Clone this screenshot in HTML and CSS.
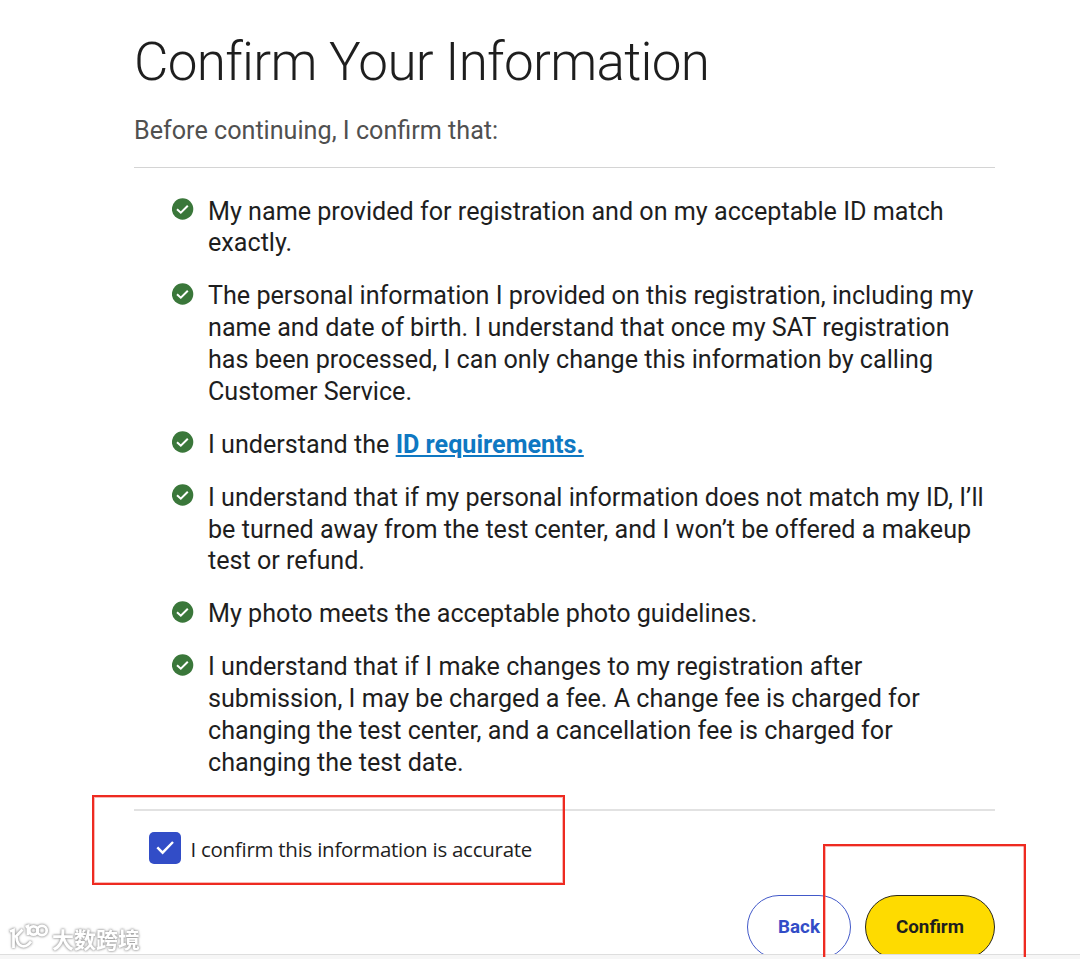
FILE: index.html
```html
<!DOCTYPE html>
<html lang="en">
<head>
<meta charset="utf-8">
<title>Confirm Your Information</title>
<link rel="stylesheet" href="styles.css">
</head>
<body>
<svg class="defs" width="0" height="0" aria-hidden="true">
  <symbol id="tick" viewBox="0 0 22 22">
    <circle cx="10.600" cy="11" r="10.700" fill="#3a773a"/>
    <path d="M5 11.200 8.800 14.700 15.800 7.700" fill="none" stroke="#fff" stroke-width="2"/>
  </symbol>
</svg>
<main class="page">
  <h1 class="title">Confirm Your Information</h1>
  <p class="lead">Before continuing, I confirm that:</p>
  <ul class="terms">
    <li class="term"><svg class="tick"><use href="#tick"/></svg><span class="text">My name provided for registration and on my acceptable ID match<br>exactly.</span></li>
    <li class="term"><svg class="tick"><use href="#tick"/></svg><span class="text">The personal information I provided on this registration, including my<br>name and date of birth. I understand that once my SAT registration<br>has been processed, I can only change this information by calling<br>Customer Service.</span></li>
    <li class="term"><svg class="tick"><use href="#tick"/></svg><span class="text">I understand the <a class="link">ID requirements.</a></span></li>
    <li class="term"><svg class="tick"><use href="#tick"/></svg><span class="text">I understand that if my personal information does not match my ID, I’ll<br>be turned away from the test center, and I won’t be offered a makeup<br>test or refund.</span></li>
    <li class="term"><svg class="tick"><use href="#tick"/></svg><span class="text">My photo meets the acceptable photo guidelines.</span></li>
    <li class="term"><svg class="tick"><use href="#tick"/></svg><span class="text">I understand that if I make changes to my registration after<br>submission, I may be charged a fee. A change fee is charged for<br>changing the test center, and a cancellation fee is charged for<br>changing the test date.</span></li>
  </ul>
  <label class="accept">
    <span class="box"><svg width="32" height="32" viewBox="0 0 32 32"><path d="M8.3 15.4 13.6 20.7 24 10" fill="none" stroke="#fff" stroke-width="2.4"/></svg></span>
    <span class="accept-text">I confirm this information is accurate</span>
  </label>
  <div class="actions">
    <button class="btn back">Back</button>
    <button class="btn confirm">Confirm</button>
  </div>
</main>
<footer class="edge"></footer>
<div class="mark mark-check"></div>
<div class="mark mark-confirm"></div>
<div class="watermark">
  <svg class="logo" width="42" height="32" viewBox="0 0 42 32">
    <g fill="none" stroke="#fff" stroke-width="2.800">
      <path d="M2 10.500 5.500 9V27M14.500 8.500 7 16.500M8.500 16C9 26 17 28.500 23 20.500"/>
      <path d="M17.500 6 20 5V14"/>
      <circle cx="25.500" cy="9.500" r="4.200"/>
      <circle cx="34" cy="9.500" r="4.700"/>
    </g>
  </svg>
  <span class="brand">大数跨境</span>
</div>
</body>
</html>
```

FILE: styles.css
```css
* { box-sizing: border-box; }

body {
  margin: 0;
  height: 959px;
  position: relative;
  overflow: hidden;
  display: flex;
  flex-direction: column;
  background: #fff;
  color: #1e1e1e;
  font-family: Roboto, "Liberation Sans", sans-serif;
}

.defs { position: absolute; }

.page {
  width: 861px;
  height: 954px;
  margin-left: 134px;
  overflow: hidden;
  white-space: nowrap;
}

.title {
  margin: 0;
  padding-top: 30px;
  font-size: 53px;
  font-weight: 300;
  line-height: 64px;
  letter-spacing: -0.690px;
}

.lead {
  margin: 0;
  padding-top: 21px;
  height: 73px;
  font-size: 25.160px;
  line-height: 32px;
  color: #505050;
}

.terms {
  margin: 0;
  padding: 27.700px 0 0 38px;
  height: 644px;
  list-style: none;
  border-top: 1px solid #d4d4d4;
  border-bottom: 2px solid #e2e2e2;
  display: flex;
  flex-direction: column;
  gap: 21.2px;
}

.term { display: flex; align-items: flex-start; gap: 14px; }
.tick { width: 22px; height: 22px; margin-top: 2.200px; flex: none; }
.text { font-size: 25.150px; line-height: 31.8px; }
.link {
  color: #0f78c2;
  font-weight: 700;
  text-decoration: underline;
}

.accept {
  display: flex;
  align-items: center;
  gap: 9px;
  margin: 21px 0 0 15.400px;
  height: 32px;
}
.box { width: 32px; height: 32px; border-radius: 5px; background: #324dc7; }
.box svg { display: block; }
.accept-text {
  padding-top: 1px;
  font-family: "Open Sans", "Noto Sans", sans-serif;
  font-size: 20.500px;
  line-height: 32px;
  letter-spacing: -0.260px;
}

.actions {
  display: flex;
  justify-content: flex-end;
  gap: 14px;
  margin-top: 31px;
}
.btn {
  height: 64px;
  padding: 0;
  border: 1px solid;
  border-radius: 32px;
  font: 700 18.800px/62px Roboto, sans-serif;
}
.back { width: 104px; background: #fff; border-color: #4259c9; color: #324dc7; }
.confirm { width: 130px; background: #fedb00; border-color: #2a281d; color: #1e1e1e; }

.edge { height: 5px; background: #f6f6f6; border-top: 1px solid #dedede; }

/* Annotation frames drawn over the dialog */
.mark { position: absolute; border: 2px solid #ee2a20; outline: 1px solid #ee2a2055; outline-offset: -3px; }
.mark-check { left: 92px; top: 795px; width: 473px; height: 90px; }
.mark-confirm { left: 823px; top: 844px; width: 203px; height: 113px; border-bottom: 0; outline: 0; box-shadow: inset 1px 1px 0 #ee2a2055, inset -1px 0 0 #ee2a2055; }

.watermark {
  position: absolute;
  left: 8px;
  top: 921px;
  display: flex;
  gap: 2px;
  filter: drop-shadow(0 0 1px #999) drop-shadow(0 0 1px #bbb);
}
.brand {
  color: #fff;
  font: 700 22px/34px "Noto Sans CJK SC", sans-serif;
}
```
